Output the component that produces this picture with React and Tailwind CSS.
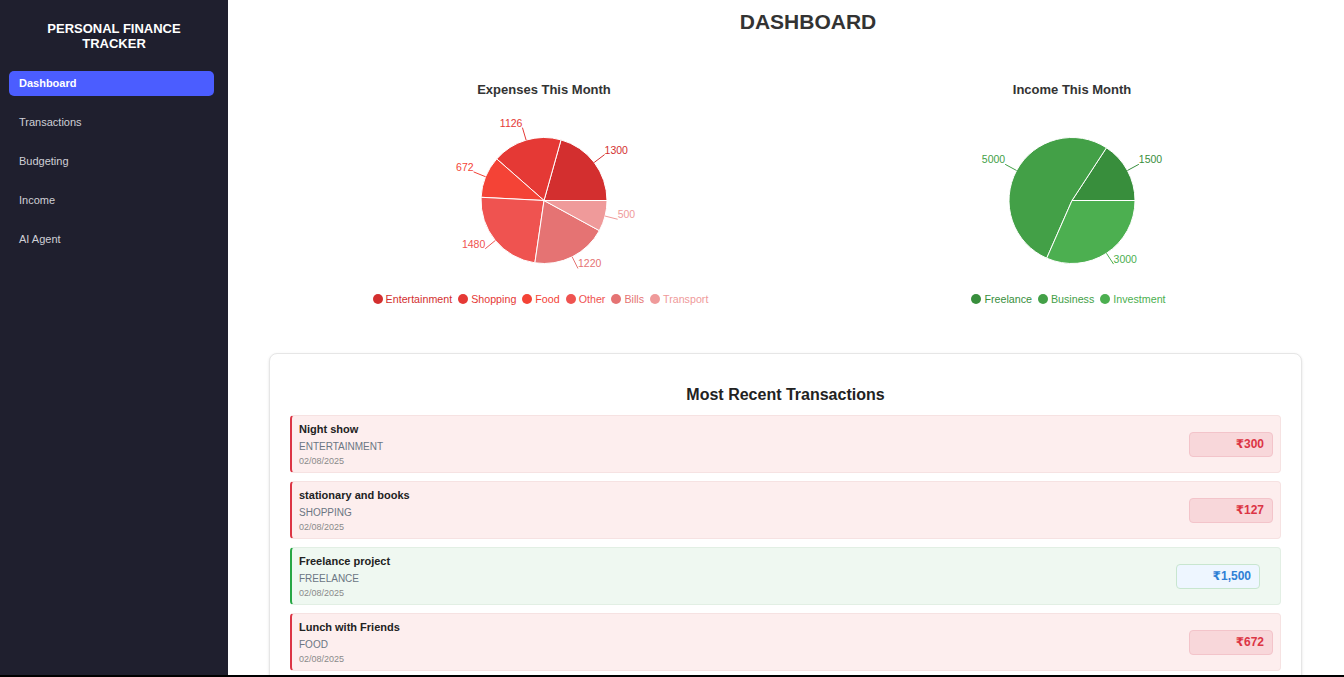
import React from 'react';

const FONT = { fontFamily: '"Liberation Sans", "DejaVu Sans", Arial, sans-serif' };

const expenses = [
  { name: 'Entertainment', value: 1300, color: '#d32f2f' },
  { name: 'Shopping', value: 1126, color: '#e53935' },
  { name: 'Food', value: 672, color: '#f44336' },
  { name: 'Other', value: 1480, color: '#ef5350' },
  { name: 'Bills', value: 1220, color: '#e57373' },
  { name: 'Transport', value: 500, color: '#ef9a9a' },
];

const income = [
  { name: 'Freelance', value: 1500, color: '#388e3c' },
  { name: 'Business', value: 5000, color: '#43a047' },
  { name: 'Investment', value: 3000, color: '#4caf50' },
];

const transactions = [
  { title: 'Night show', category: 'ENTERTAINMENT', date: '02/08/2025', amount: '₹300', type: 'expense' },
  { title: 'stationary and books', category: 'SHOPPING', date: '02/08/2025', amount: '₹127', type: 'expense' },
  { title: 'Freelance project', category: 'FREELANCE', date: '02/08/2025', amount: '₹1,500', type: 'income' },
  { title: 'Lunch with Friends', category: 'FOOD', date: '02/08/2025', amount: '₹672', type: 'expense' },
];

const navItems = ['Dashboard', 'Transactions', 'Budgeting', 'Income', 'AI Agent'];

function PieChart({ data }) {
  const cx = 264;
  const cy = 103.5;
  const r = 63;
  const lr = 76;
  const total = data.reduce((s, d) => s + d.value, 0);
  const pt = (deg, rad) => {
    const a = (deg * Math.PI) / 180;
    return [cx + rad * Math.cos(a), cy - rad * Math.sin(a)];
  };

  let start = 0;
  const slices = data.map((d) => {
    const sweep = (d.value / total) * 360;
    const end = start + sweep;
    const mid = start + sweep / 2;
    const [x0, y0] = pt(start, r);
    const [x1, y1] = pt(end, r);
    const large = sweep > 180 ? 1 : 0;
    const path = `M${cx},${cy} L${x0},${y0} A${r},${r} 0 ${large} 0 ${x1},${y1} Z`;
    const [ox, oy] = pt(mid, r);
    const [lx, ly] = pt(mid, lr);
    start = end;
    return { ...d, path, ox, oy, lx, ly };
  });

  return (
    <svg width="528" height="194" className="block -mt-[1px]">
      {slices.map((s) => (
        <path key={s.name} d={s.path} fill={s.color} stroke="#fff" strokeWidth="1" />
      ))}
      {slices.map((s) => (
        <g key={s.name + 'l'}>
          <path d={`M${s.ox},${s.oy} L${s.lx},${s.ly}`} stroke={s.color} fill="none" strokeWidth="1" />
          <text
            x={s.lx}
            y={s.ly - 1}
            fill={s.color}
            fontSize="10.5"
            textAnchor={s.lx > cx ? 'start' : 'end'}
            style={FONT}
          >
            {s.value}
          </text>
        </g>
      ))}
    </svg>
  );
}

function ChartBlock({ title, data }) {
  return (
    <div className="flex flex-col items-center">
      <h3 className="pt-[1px] text-[13px] leading-4 font-bold text-[#333]">{title}</h3>
      <PieChart data={data} />
      <div className="flex items-center justify-center gap-[6px] h-[14px] text-[10.7px] leading-[14px] -ml-[7px] mt-[1px]">
        {data.map((d) => (
          <div key={d.name} className="flex items-center gap-[3px]" style={{ color: d.color }}>
            <span className="w-[10px] h-[10px] rounded-full" style={{ backgroundColor: d.color }} />
            <span>{d.name}</span>
          </div>
        ))}
      </div>
    </div>
  );
}

function TransactionRow({ t }) {
  const isIncome = t.type === 'income';
  return (
    <div
      className={
        isIncome
          ? 'flex items-center justify-between h-[58px] rounded border border-[#e2efe4] border-l-2 border-l-[#28a745] bg-[#eff8f1] pl-[7px]'
          : 'flex items-center justify-between h-[58px] rounded border border-[#f6e2e2] border-l-2 border-l-[#dc3545] bg-[#fdeeee] pl-[7px]'
      }
    >
      <div className="flex flex-col self-start pt-[7px]">
        <div className="text-[11px] leading-[13px] font-bold text-[#222]">{t.title}</div>
        <div className="mt-[5px] text-[10px] leading-[12px] text-[#6b7683]">{t.category}</div>
        <div className="mt-[3px] text-[9px] leading-[11px] text-[#8a8a8a]">{t.date}</div>
      </div>
      <div
        className={
          isIncome
            ? 'mr-[20px] w-[84px] h-[25px] flex items-center justify-end pr-2 rounded-sm border border-[#c8e6cf] bg-[#eef6ff] text-[12px] font-bold text-[#2f80d5]'
            : 'mr-[7px] w-[84px] h-[25px] flex items-center justify-end pr-2 rounded-sm border border-[#f3c4ca] bg-[#f8d7da] text-[12px] font-bold text-[#dc3545]'
        }
      >
        {t.amount}
      </div>
    </div>
  );
}

export default function App() {
  return (
    <div className="h-[677px] w-[1344px] flex flex-col overflow-hidden bg-white" style={FONT}>
      <div className="flex flex-1 min-h-0">
        {/* ── Sidebar ── */}
        <aside className="w-[228px] shrink-0 bg-[#1f1f2e] flex flex-col">
          <h1 className="pt-[21px] text-center text-[13px] leading-[15px] font-bold text-white">
            PERSONAL FINANCE
            <br />
            TRACKER
          </h1>
          <nav className="mt-[20px] px-[9px] flex flex-col">
            {navItems.map((item, i) => (
              <div
                key={item}
                className={
                  i === 0
                    ? 'h-[25px] w-[205px] flex items-center pl-[10px] rounded-[5px] bg-[#4b5dff] text-white text-[11px] font-bold'
                    : 'h-[25px] mt-[14px] flex items-center pl-[10px] text-[#cfcfd6] text-[11px] font-medium'
                }
              >
                {item}
              </div>
            ))}
          </nav>
        </aside>

        {/* ── Main ── */}
        <main className="flex-1 min-w-0 overflow-hidden">
          <div className="ml-[52px] mr-[8px]">
            <h2 className="pt-[10px] text-center text-[21px] leading-6 font-bold text-[#333]">DASHBOARD</h2>
            <div className="mt-[47px] grid grid-cols-2">
              <ChartBlock title="Expenses This Month" data={expenses} />
              <ChartBlock title="Income This Month" data={income} />
            </div>
          </div>

          <section className="mt-[47px] ml-[41px] mr-[42px] rounded-lg border border-[#e6e6e6] bg-white px-5 pt-[31px] pb-6 shadow-sm">
            <h2 className="text-center text-[16px] leading-5 font-bold text-[#222]">Most Recent Transactions</h2>
            <div className="mt-[10px] flex flex-col gap-2">
              {transactions.map((t) => (
                <TransactionRow key={t.title} t={t} />
              ))}
            </div>
          </section>
        </main>
      </div>
      <div className="h-[2px] bg-black shrink-0" />
    </div>
  );
}
